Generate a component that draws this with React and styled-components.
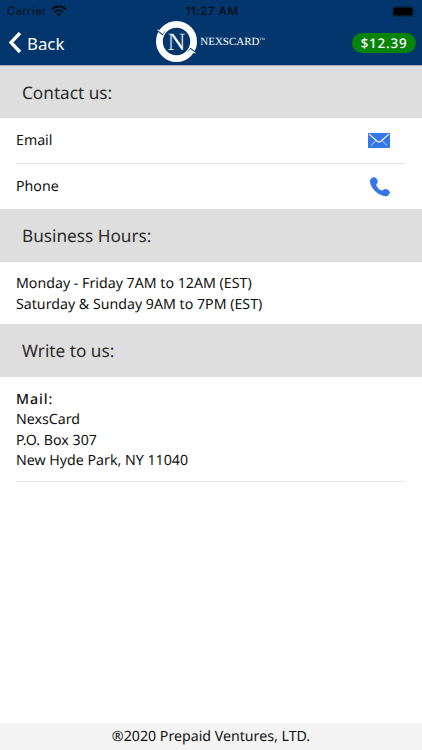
import React from 'react'
import styled, { createGlobalStyle } from 'styled-components'

const GlobalStyle = createGlobalStyle`
  * {
    box-sizing: border-box;
  }
  body {
    margin: 0;
    background: #fff;
    color: #111;
    font-family: 'Noto Sans', sans-serif;
    font-size: 14.2px;
    line-height: 20.4px;
    text-rendering: geometricPrecision;
  }
`

const Screen = styled.div`
  display: flex;
  flex-direction: column;
  height: 750px;
`

const Header = styled.header`
  height: 66px;
  background: #02366d;
  border-bottom: 1px solid #a5b0c0;
`

const StatusBar = styled.div`
  display: grid;
  grid-template-columns: 1fr auto 1fr;
  align-items: center;
  height: 21px;
  padding: 1px 5px 0 7px;
  color: #04101f;
  font-family: Inter, sans-serif;
  font-size: 11.5px;
  line-height: 20px;
`

const Carrier = styled.div`
  display: flex;
  align-items: center;
  gap: 5px;
  letter-spacing: 0.25px;
`

const Time = styled.div`
  font-weight: 600;
  letter-spacing: 0.5px;
`

const Battery = styled.svg`
  justify-self: end;
`

const NavBar = styled.nav`
  display: grid;
  grid-template-columns: 1fr auto 1fr;
  align-items: center;
  height: 44px;
  padding: 0 6px 0 8px;
`

const BackButton = styled.button`
  display: flex;
  align-items: center;
  gap: 5px;
  padding: 0;
  border: none;
  background: none;
  color: #fff;
  font-family: inherit;
  font-size: 16.8px;
  line-height: 24px;
`

const BackLabel = styled.span`
  padding-top: 2px;
`

const Brand = styled.div`
  display: flex;
  align-items: center;
  gap: 3px;
  margin: -4px 3px 0 0;
  color: #fff;
`

const BrandName = styled.span`
  display: flex;
  padding-top: 1px;
  font-family: 'Liberation Serif', serif;
  font-size: 11px;
  line-height: 14px;
`

const Trademark = styled.span`
  font-size: 3.5px;
  line-height: 8px;
`

const Balance = styled.div`
  justify-self: end;
  width: 64px;
  height: 20px;
  border-radius: 10px;
  background: #078307;
  color: #fff;
  font-size: 13.4px;
  font-weight: 500;
  line-height: 21px;
  letter-spacing: 0.8px;
  text-align: center;
`

const SectionTitle = styled.h2`
  height: 53px;
  margin: 0;
  padding-left: 22px;
  background: #dedede;
  color: #2b2b2b;
  font-size: 17.2px;
  font-weight: 400;
  line-height: 56px;

  ${Header} + & {
    height: 52px;
    line-height: 55px;
  }
`

const ContactRow = styled.div`
  display: flex;
  align-items: center;
  justify-content: space-between;
  height: 45px;
  margin: 0 16px;
  padding-right: 16px;

  & + & {
    height: 46px;
    border-top: 1px solid #e6e6e6;
  }
`

const RowLabel = styled.span`
  padding-top: 2px;
`

const Details = styled.div`
  margin: 0 16px;
  padding: 12.4px 0 8.8px;
`

const Address = styled(Details)`
  height: 105px;
  padding-top: 13px;
  border-bottom: 1px solid #e6e6e6;
`

const Label = styled.div`
  font-weight: 500;
  letter-spacing: 0.9px;
`

const Footer = styled.footer`
  height: 27px;
  margin-top: auto;
  background: #f4f4f4;
  line-height: 27px;
  text-align: center;
`

function WifiIcon() {
  return (
    <svg width="16" height="12" viewBox="0 0 16 12" fill="none" stroke="#04101f">
      <path d="M1 4.2a10 10 0 0 1 14 0" strokeWidth="2.1" />
      <path d="M3.7 7a6.2 6.2 0 0 1 8.6 0" strokeWidth="2" />
      <path d="M8 11.5 5.7 9.1a3.4 3.4 0 0 1 4.6 0z" fill="#04101f" stroke="none" />
    </svg>
  )
}

// Two arrows chasing each other around the N
function Logo() {
  return (
    <svg width="41" height="41" viewBox="0 0 41 41">
      <circle cx="20.5" cy="20.5" r="17.1" fill="none" stroke="#fff" strokeWidth="6.8" />
      <path d="M0 8.900 9.600 9.900 6.500 14.300z" fill="#02366d" />
      <path d="M41 32.100 31.400 31.100 34.500 26.700z" fill="#02366d" />
      <path d="M.8 8.700 9.800 9.300 6.800 12.900z" fill="#fff" />
      <path d="M40.200 32.300 31.200 31.700 34.200 28.100z" fill="#fff" />
      <text
        x="20.5"
        y="28.7"
        fill="#fff"
        stroke="#02366d"
        strokeWidth="0.2"
        fontFamily="Liberation Serif, serif"
        fontSize="25"
        textAnchor="middle"
      >
        N
      </text>
    </svg>
  )
}

function MailIcon() {
  return (
    <svg width="22" height="15" viewBox="0 0 22 15">
      <path d="M0 0h22v15H0z" fill="#3578e5" />
      <path d="M1 1.200 9.500 8.500q1.500 1 3 0L21 1.200" fill="none" stroke="#fff" strokeWidth="1.1" />
      <path d="M3 12.500 8 7.500M19 12.500 14 7.500" fill="none" stroke="#fff" strokeWidth="0.7" />
    </svg>
  )
}

function PhoneIcon() {
  return (
    <svg width="20" height="20" viewBox="0 0 20 20">
      <path
        d="M.8 1.800C2.200.2 4.700-.3 6 .9c1.200 1.300 1.800 3 1.700 4.400-.1 1.400-1.800 1.700-1.300 3.100.9 2 3 4.200 5.200 5 1.400.4 2-1.300 3.500-1.300 1.700 0 3.400.9 4.400 2.200.9 1.200.2 2.800-1.500 4.100-1.800 1.400-4.800 1.100-8-.8C6.200 15.700 2.300 11.600.8 7.700 0 5.300-.3 3.200.8 1.800z"
        fill="#3578e5"
      />
    </svg>
  )
}

export default function App() {
  return (
    <Screen>
      <GlobalStyle />
      <Header>
        <StatusBar>
          <Carrier>
            Carrier
            <WifiIcon />
          </Carrier>
          <Time>11:27 AM</Time>
          <Battery width="25" height="11" viewBox="0 0 25 11">
            <rect x="0.5" y="0.5" width="21" height="10" rx="2.5" fill="none" stroke="#06294f" />
            <rect x="1.500" y="1.500" width="19" height="8" rx="1.500" fill="#000" />
            <path d="M23 4v3q1-.4 1-1.500t-1-1.500z" fill="#06294f" />
          </Battery>
        </StatusBar>
        <NavBar>
          <BackButton>
            <svg width="14" height="22" viewBox="0 0 14 22">
              <path d="M12 1 3 10.500l9 9.500" fill="none" stroke="#fff" strokeWidth="3.300" />
            </svg>
            <BackLabel>Back</BackLabel>
          </BackButton>
          <Brand>
            <Logo />
            <BrandName>
              NEXSCARD<Trademark>TM</Trademark>
            </BrandName>
          </Brand>
          <Balance>$12.39</Balance>
        </NavBar>
      </Header>

      <SectionTitle>Contact us:</SectionTitle>
      <ContactRow>
        <RowLabel>Email</RowLabel>
        <MailIcon />
      </ContactRow>
      <ContactRow>
        <RowLabel>Phone</RowLabel>
        <PhoneIcon />
      </ContactRow>

      <SectionTitle>Business Hours:</SectionTitle>
      <Details>
        <div>Monday - Friday 7AM to 12AM (EST)</div>
        <div>Saturday &amp; Sunday 9AM to 7PM (EST)</div>
      </Details>

      <SectionTitle>Write to us:</SectionTitle>
      <Address>
        <Label>Mail:</Label>
        <div>NexsCard</div>
        <div>P.O. Box 307</div>
        <div>New Hyde Park, NY 11040</div>
      </Address>

      <Footer>®2020 Prepaid Ventures, LTD.</Footer>
    </Screen>
  )
}
